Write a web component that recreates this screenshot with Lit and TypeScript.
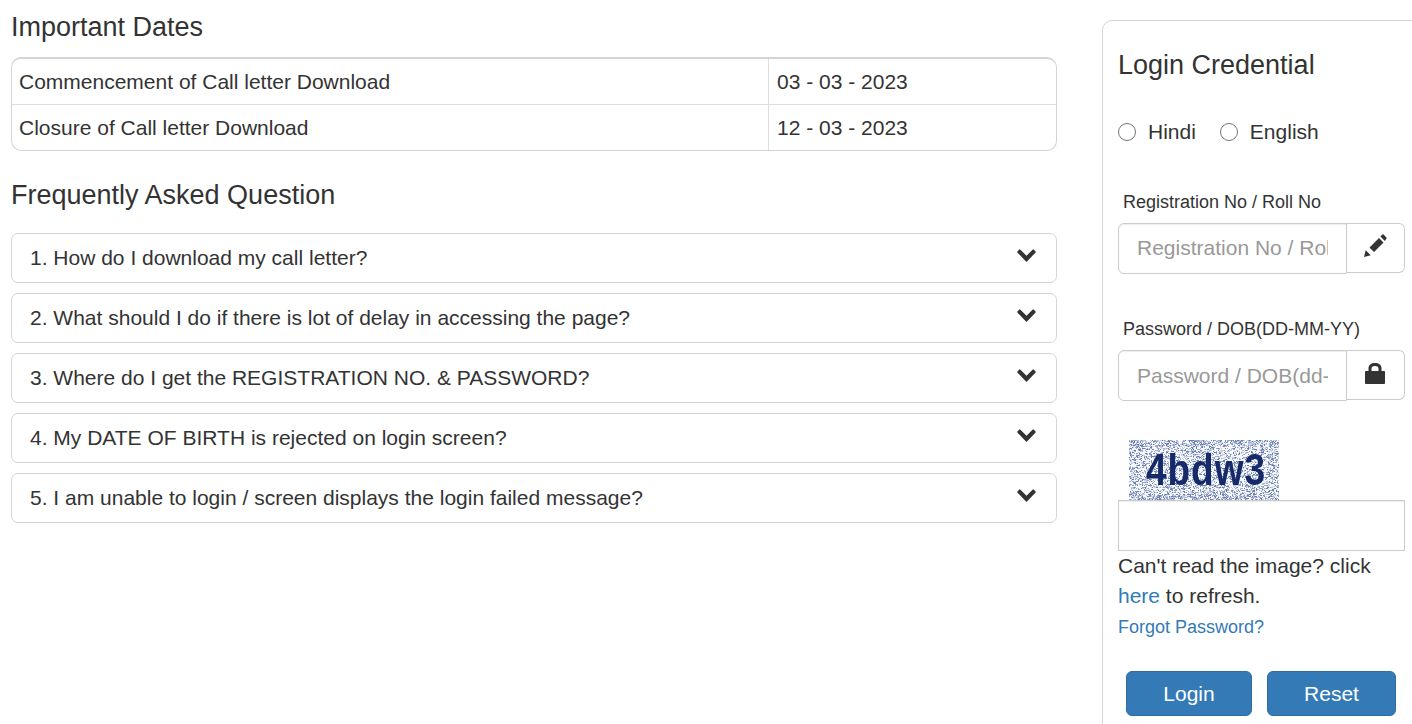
import { LitElement, html, css, svg } from "lit";
import { customElement } from "lit/decorators.js";

const FAQ = [
  "1. How do I download my call letter?",
  "2. What should I do if there is lot of delay in accessing the page?",
  "3. Where do I get the REGISTRATION NO. & PASSWORD?",
  "4. My DATE OF BIRTH is rejected on login screen?",
  "5. I am unable to login / screen displays the login failed message?",
];

function noise() {
  let seed = 12345;
  const rnd = () => {
    seed = (seed * 1103515245 + 12345) & 0x7fffffff;
    return seed / 0x7fffffff;
  };
  const dots = [];
  for (let y = 0; y < 60; y += 1) {
    const edge = y < 7 || y > 53;
    const density = edge ? 0.56 : 0.36;
    for (let x = 0; x < 150; x += 1) {
      rnd();
      const r = rnd();
      if (r < density) {
        const t = r / density;
        const fill = t < 0.3 ? "#6b80b0" : t < 0.65 ? "#98a8cc" : "#c2cbe0";
        dots.push(svg`<rect x=${x} y=${y} width=${rnd() > 0.7 ? 2 : 1} height="1" fill=${fill}></rect>`);
      }
    }
  }
  return dots;
}
const NOISE = noise();

@customElement("app-root")
export class AppRoot extends LitElement {
  static styles = css`
    :host {
      display: flex;
      width: 1412px;
      height: 724px;
      overflow: hidden;
      background: #fff;
      color: #333;
      font-family: "Liberation Sans", Arial, sans-serif;
      font-size: 21px;
      line-height: 30px;
      box-sizing: border-box;
      padding-left: 11px;
      gap: 45px;
    }
    * { box-sizing: border-box; }
    .main { width: 1046px; flex: none; }
    h3 {
      margin: 0;
      font-weight: 400;
      font-size: 27px;
      line-height: 30px;
    }
    .h-dates { margin-top: 12px; }
    .dates {
      margin-top: 15px;
      border: 1px solid #d4d4d4;
      border-top: 2px solid #d4d4d4;
      border-radius: 10px;
      display: grid;
      grid-template-columns: 756px 1fr;
    }
    .dates > div { padding: 0 8px 0 7px; height: 45px; display: flex; align-items: center; }
    .dates .r1 { height: 46px; border-bottom: 1px solid #ddd; }
    .dates .v { border-left: 1px solid #ddd; padding-left: 8px; }
    .h-faq { margin-top: 29px; }
    .faq { margin-top: 23px; display: flex; flex-direction: column; gap: 10px; }
    .item {
      height: 50px;
      border: 1px solid #d4d4d4;
      border-radius: 7px;
      padding: 0 18px;
      display: flex;
      align-items: center;
      justify-content: space-between;
    }
    .item svg { display: block; width: 19px; height: 13px; margin: -5px 2px 0 0; }
    .panel {
      flex: none;
      width: 330px;
      height: 760px;
      margin-top: 20px;
      border: 1px solid #d4d4d4;
      border-radius: 10px;
      padding: 29px 0 0 15px;
    }
    .radios { margin-top: 37px; display: flex; align-items: center; height: 30px; }
    .radios input { width: 18px; height: 18px; margin: 0 12px 0 0; }
    .radios label { display: flex; align-items: center; margin-right: 24px; }
    .lbl { font-size: 18px; line-height: 24px; padding-left: 5px; }
    .lbl.reg { margin-top: 43px; }
    .lbl.pw { margin-top: 43px; }
    .group { margin-top: 9px; width: 287px; display: flex; height: 51px; }
    .group input {
      width: 229px;
      height: 51px;
      flex: none;
      border: 1px solid #ccc;
      border-radius: 6px 0 0 6px;
      padding: 0 18px;
      font: inherit;
      color: #555;
      background: #fff;
      box-shadow: inset 0 1px 1px rgba(0, 0, 0, 0.075);
      outline: none;
    }
    .group input.up { padding-bottom: 2px; }
    .group input::placeholder { color: #999; opacity: 1; }
    .addon {
      flex: 1;
      height: 50px;
      border: 1px solid #ccc;
      border-left: 0;
      border-radius: 0 6px 6px 0;
      display: flex;
      align-items: center;
      justify-content: center;
    }
    .addon svg { display: block; }
    .pencil { width: 23px; height: 23px; margin: -5px 1px 0 0; }
    .lock { width: 20px; height: 21px; margin: -3px 2px 0 0; }
    .captcha { display: block; margin: 39px 0 0 11px; width: 150px; height: 60px; }
    .captcha text { letter-spacing: 1px; }
    .captcha-input {
      display: block;
      width: 287px;
      height: 51px;
      border: 1px solid #ccc;
      box-shadow: inset 0 1px 1px rgba(0, 0, 0, 0.075);
      background: #fff;
      outline: none;
    }
    .help { width: 270px; }
    a { color: #337ab7; text-decoration: none; }
    .forgot { display: block; font-size: 18px; line-height: 24px; margin-top: 4px; }
    .btns { display: flex; margin: 32px 0 0 8px; gap: 15px; }
    .btn {
      height: 45px;
      border: 1px solid #2e6da4;
      border-radius: 6px;
      background: #337ab7;
      color: #fff;
      font: inherit;
      padding: 0;
    }
    .login { width: 126px; }
    .reset { width: 129px; }
  `;

  render() {
    return html`
      <div class="main">
        <h3 class="h-dates">Important Dates</h3>
        <div class="dates">
          <div class="r1">Commencement of Call letter Download</div>
          <div class="r1 v">03 - 03 - 2023</div>
          <div>Closure of Call letter Download</div>
          <div class="v">12 - 03 - 2023</div>
        </div>
        <h3 class="h-faq">Frequently Asked Question</h3>
        <div class="faq">
          ${FAQ.map(
            (q) => html`<div class="item">
              <span>${q}</span>
              <svg viewBox="0 0 19 13"><path d="M3.2 .4 9.5 6.7 15.8 .4Q16.2 0 16.6 .4L18.6 2.6Q19 3 18.6 3.4L10 12.6Q9.5 13 9 12.6L.4 3.4Q0 3 .4 2.6L2.4 .4Q2.8 0 3.2 .4Z" fill="#333"></path></svg>
            </div>`
          )}
        </div>
      </div>
      <div class="panel">
        <h3>Login Credential</h3>
        <div class="radios">
          <label><input type="radio" name="lang" />Hindi</label>
          <label><input type="radio" name="lang" />English</label>
        </div>
        <div class="lbl reg">Registration No / Roll No</div>
        <div class="group">
          <input class="up" placeholder="Registration No / Roll No" />
          <div class="addon">
            <svg class="pencil" viewBox="0 0 23 23"><path d="M5.5 13.5 15 4 19.5 8.5 10 18ZM16.4 2.6 18.4 .6Q19 0 19.6 .6L22.4 3.4Q23 4 22.4 4.6L20.9 7.1ZM0 23 1.7 16.3 6.7 21.3Z" fill="#333"></path></svg>
          </div>
        </div>
        <div class="lbl pw">Password / DOB(DD-MM-YY)</div>
        <div class="group">
          <input placeholder="Password / DOB(dd-mm-yy)" />
          <div class="addon">
            <svg class="lock" viewBox="0 0 20 21"><path d="M3.5 8V5.5C3.5 1.5 6.5 0 10 0S16.5 1.5 16.5 5.5V8H19C19.6 8 20 8.4 20 9V20C20 20.6 19.6 21 19 21H1C.4 21 0 20.6 0 20V9C0 8.4 .4 8 1 8ZM6.5 8H13.5V5.5C13.5 3.8 12 3 10 3S6.5 3.8 6.5 5.5Z" fill="#333" fill-rule="evenodd"></path></svg>
          </div>
        </div>
        <svg class="captcha" viewBox="0 0 150 60">
          <defs><filter id="soft"><feGaussianBlur stdDeviation="0.4"></feGaussianBlur></filter></defs>
          <rect width="150" height="60" fill="#f6f7fb"></rect>
          ${NOISE}
          <text transform="translate(77 45) scale(1 1.2)" text-anchor="middle" filter="url(#soft)" font-family="Liberation Sans, Arial, sans-serif" font-weight="700" font-size="37" fill="#142a6b">4bdw3</text>
        </svg>
        <input class="captcha-input" />
        <div class="help">Can't read the image? click <a href="#">here</a> to refresh.</div>
        <a class="forgot" href="#">Forgot Password?</a>
        <div class="btns">
          <button class="btn login">Login</button>
          <button class="btn reset">Reset</button>
        </div>
      </div>
    `;
  }
}
